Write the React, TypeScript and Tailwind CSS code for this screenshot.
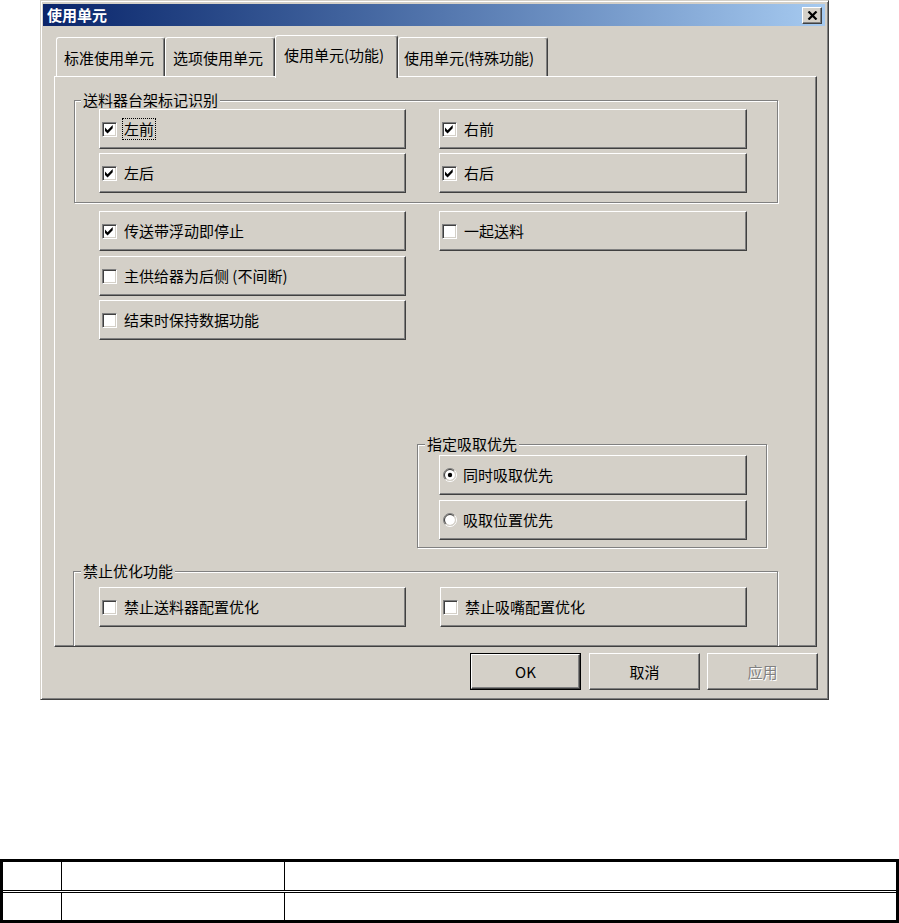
import React from "react";

const raised =
  "bg-[#d4d0c8] border border-t-white border-l-white border-r-[#404040] border-b-[#404040] shadow-[inset_-1px_-1px_#808080]";

function CheckBox({ checked }: { checked: boolean }) {
  return (
    <div className="w-[15px] h-[15px] bg-white border border-t-[#808080] border-l-[#808080] border-r-white border-b-white shadow-[inset_1px_1px_#404040,inset_-1px_-1px_#d4d0c8] flex items-center justify-center shrink-0">
      {checked && (
        <svg width="9" height="9" viewBox="0 0 7 7" className="block">
          <path
            d="M0 2 L2 4 L6 0 L6 2.6 L2 6.6 L0 4.6 Z"
            fill="#000"
          />
        </svg>
      )}
    </div>
  );
}

function Radio({ checked }: { checked: boolean }) {
  const c = 7;
  const r1 = 6.5;
  const r2 = 5.5;
  const k = Math.SQRT1_2;
  const bl = (r: number) => `${c - r * k} ${c + r * k}`;
  const tr = (r: number) => `${c + r * k} ${c - r * k}`;
  return (
    <svg width="14" height="14" viewBox="0 0 14 14" className="block shrink-0">
      <circle cx={c} cy={c} r={5} fill="#fff" />
      <path d={`M${bl(r1)} A${r1} ${r1} 0 0 1 ${tr(r1)}`} stroke="#808080" strokeWidth="1" fill="none" />
      <path d={`M${tr(r1)} A${r1} ${r1} 0 0 1 ${bl(r1)}`} stroke="#ffffff" strokeWidth="1" fill="none" />
      <path d={`M${bl(r2)} A${r2} ${r2} 0 0 1 ${tr(r2)}`} stroke="#404040" strokeWidth="1" fill="none" />
      <path d={`M${tr(r2)} A${r2} ${r2} 0 0 1 ${bl(r2)}`} stroke="#d4d0c8" strokeWidth="1" fill="none" />
      {checked && <circle cx={c} cy={c} r={2.2} fill="#000" />}
    </svg>
  );
}

function CheckBtn({
  label,
  checked = false,
  focus = false,
  w = "w-[307px]",
}: {
  label: string;
  checked?: boolean;
  focus?: boolean;
  w?: string;
}) {
  return (
    <div className={`${raised} ${w} h-[40px] flex items-center pl-[2px]`}>
      <CheckBox checked={checked} />
      <span
        className={`ml-[7px] text-[15px] leading-[18px] text-black whitespace-nowrap ${
          focus ? "outline outline-1 outline-dotted outline-black outline-offset-[1px]" : ""
        }`}
      >
        {label}
      </span>
    </div>
  );
}

function RadioBtn({ label, checked = false }: { label: string; checked?: boolean }) {
  return (
    <div className={`${raised} w-[308px] h-[40px] flex items-center pl-[3px]`}>
      <Radio checked={checked} />
      <span className="ml-[6px] text-[15px] leading-[18px] text-black whitespace-nowrap">{label}</span>
    </div>
  );
}

function Group({
  title,
  className,
  legendLeft,
  children,
}: {
  title: string;
  className: string;
  legendLeft: string;
  children?: React.ReactNode;
}) {
  return (
    <div
      className={`relative border border-[#808080] shadow-[inset_1px_1px_#ffffff,1px_1px_#ffffff] ${className}`}
    >
      <span
        className={`absolute top-[-10px] ${legendLeft} px-[2px] bg-[#d4d0c8] text-[15px] leading-[18px] text-black whitespace-nowrap`}
      >
        {title}
      </span>
      {children}
    </div>
  );
}

function Tab({
  label,
  w,
  selected = false,
  pl,
}: {
  label: string;
  w: string;
  selected?: boolean;
  pl: string;
}) {
  const base =
    "bg-[#d4d0c8] border-l border-t border-r border-l-white border-t-white border-r-[#404040] shadow-[inset_-1px_0_#808080] rounded-t-[3px] text-[15px] leading-[18px] text-black whitespace-nowrap";
  return selected ? (
    <div className={`${base} ${w} ${pl} h-[43px] pt-[10px]`}>{label}</div>
  ) : (
    <div className={`${base} ${w} ${pl} h-[39px] mb-[2px] pt-[11px]`}>{label}</div>
  );
}

function PushButton({
  label,
  isDefault = false,
  disabled = false,
}: {
  label: string;
  isDefault?: boolean;
  disabled?: boolean;
}) {
  const text = disabled
    ? "text-[#808080] [text-shadow:1px_1px_0_#ffffff]"
    : "text-black";
  const inner = (
    <div className={`${raised} w-full h-full flex items-center justify-center text-[15px] leading-[18px] ${text}`}>
      {label}
    </div>
  );
  return isDefault ? (
    <div className="w-[111px] h-[37px] border border-black">{inner}</div>
  ) : (
    <div className="w-[111px] h-[37px]">{inner}</div>
  );
}

export default function App() {
  return (
    <div className="w-[899px] h-[923px] bg-white font-['Noto_Sans_CJK_SC','Noto_Sans',sans-serif] overflow-hidden">
      <div className="pl-[40px]">
        {/* Window */}
        <div className="w-[789px] h-[700px] bg-[#d4d0c8] border border-t-[#d4d0c8] border-l-[#d4d0c8] border-r-[#404040] border-b-[#404040] shadow-[inset_1px_1px_#ffffff,inset_-1px_-1px_#808080] pt-[3px] pl-[2px] pr-[3px] flex flex-col">
          {/* Title bar */}
          <div className="h-[22px] flex items-center justify-between bg-gradient-to-r from-[#0a246a] to-[#a6caf0] pl-[4px] pr-[3px]">
            <span className="text-white font-bold text-[15px] leading-[18px]">使用单元</span>
            <div className={`${raised} w-[20px] h-[17px] flex items-center justify-center`}>
              <svg width="11" height="9" viewBox="0 0 11 9" className="block">
                <path d="M1.5 0.5 L9.5 8.5 M9.5 0.5 L1.5 8.5" stroke="#000" strokeWidth="2.2" />
              </svg>
            </div>
          </div>

          {/* Tabs */}
          <div className="relative z-10 mt-[9px] -mb-[2px] ml-[11px] h-[43px] pl-[2px] flex items-end">
            <Tab label="标准使用单元" w="w-[109px]" pl="pl-[7px]" />
            <Tab label="选项使用单元" w="w-[110px]" pl="pl-[7px]" />
            <Tab label="使用单元(功能)" w="w-[123px]" pl="pl-[8px]" selected />
            <Tab label="使用单元(特殊功能)" w="w-[150px]" pl="pl-[5px]" />
          </div>

          {/* Panel */}
          <div className={`${raised} ml-[11px] w-[763px] h-[571px] overflow-hidden pl-[19px] pt-[23px]`}>
            <Group title="送料器台架标记识别" className="w-[704px] h-[103px] pl-[24px] pt-[8px]" legendLeft="left-[6px]">
              <div className="grid grid-cols-[307px_308px] gap-x-[33px] gap-y-[4px]">
                <CheckBtn label="左前" checked focus />
                <CheckBtn label="右前" checked w="w-[308px]" />
                <CheckBtn label="左后" checked />
                <CheckBtn label="右后" checked w="w-[308px]" />
              </div>
            </Group>

            <div className="mt-[8px] ml-[25px] flex gap-x-[33px] items-start">
              <div className="flex flex-col">
                <CheckBtn label="传送带浮动即停止" checked />
                <div className="mt-[5px]">
                  <CheckBtn label="主供给器为后侧 (不间断)" />
                </div>
                <div className="mt-[4px]">
                  <CheckBtn label="结束时保持数据功能" />
                </div>
              </div>
              <CheckBtn label="一起送料" w="w-[308px]" />
            </div>

            <Group title="指定吸取优先" className="mt-[104px] ml-[343px] w-[350px] h-[104px] pl-[21px] pt-[10px]" legendLeft="left-[7px]">
              <div className="flex flex-col gap-y-[5px]">
                <RadioBtn label="同时吸取优先" checked />
                <RadioBtn label="吸取位置优先" />
              </div>
            </Group>

            <Group title="禁止优化功能" className="mt-[23px] -ml-[1px] w-[705px] h-[100px] pl-[25px] pt-[15px]" legendLeft="left-[7px]">
              <div className="grid grid-cols-[307px_307px] gap-x-[34px]">
                <CheckBtn label="禁止送料器配置优化" />
                <CheckBtn label="禁止吸嘴配置优化" />
              </div>
            </Group>
          </div>

          {/* Bottom buttons */}
          <div className="mt-[6px] ml-[11px] w-[764px] flex justify-end">
            <PushButton label="OK" isDefault />
            <div className="w-[8px]" />
            <PushButton label="取消" />
            <div className="w-[7px]" />
            <PushButton label="应用" disabled />
          </div>
        </div>
      </div>

      {/* Table */}
      <div className="mt-[159px] w-[899px] h-[64px] border-[3px] border-black">
        <div className="flex h-[31px] border-b-[3px] border-double border-black">
          <div className="w-[59px] border-r border-black" />
          <div className="w-[223px] border-r border-black" />
          <div className="flex-1" />
        </div>
        <div className="flex h-[27px]">
          <div className="w-[59px] border-r border-black" />
          <div className="w-[223px] border-r border-black" />
          <div className="flex-1" />
        </div>
      </div>
    </div>
  );
}
